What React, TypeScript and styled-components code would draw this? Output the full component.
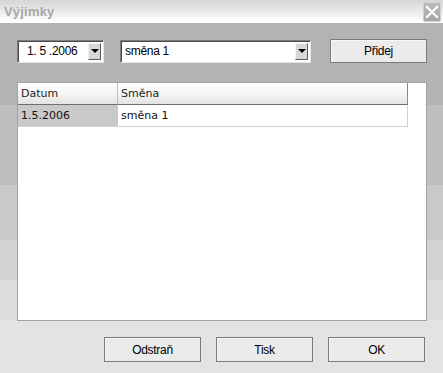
import React from 'react';
import styled, { createGlobalStyle } from 'styled-components';

const GlobalStyle = createGlobalStyle`
  html, body {
    margin: 0;
    padding: 0;
    background: #e4e4e4;
  }
`;

const rows = [{ date: '1.5.2006', shift: 'směna 1' }];

const App = () => {
  return (
    <Window>
      <GlobalStyle />
      <TitleBar>
        <Title>Výjimky</Title>
        <CloseButton aria-label="close">
          <svg width="14" height="14" viewBox="0 0 14 14">
            <path d="M2 2 L12 12 M12 2 L2 12" stroke="#fff" strokeWidth="2.2" strokeLinecap="square" />
          </svg>
        </CloseButton>
      </TitleBar>
      <Body>
        <TopRow>
          <Field $width={87}>
            <FieldText $center>1. 5 .2006</FieldText>
            <DropButton>
              <Arrow />
            </DropButton>
          </Field>
          <Field $width={191}>
            <FieldText>směna 1</FieldText>
            <DropButton>
              <Arrow />
            </DropButton>
          </Field>
          <AddButton $height={24}>Přidej</AddButton>
        </TopRow>
        <Panel>
          <Table>
            <HeadCell>Datum</HeadCell>
            <HeadCell $last>Směna</HeadCell>
            {rows.map((r) => (
              <React.Fragment key={r.date}>
                <DataCell $shaded>{r.date}</DataCell>
                <DataCell $last>{r.shift}</DataCell>
              </React.Fragment>
            ))}
          </Table>
        </Panel>
        <ButtonRow>
          <Button $height={25}>Odstraň</Button>
          <Button $height={25}>Tisk</Button>
          <Button $height={25}>OK</Button>
        </ButtonRow>
      </Body>
    </Window>
  );
};

const Window = styled.div`
  width: 443px;
  height: 373px;
  display: flex;
  flex-direction: column;
  overflow: hidden;
  font-family: 'Liberation Sans', Arial, sans-serif;
`;

const TitleBar = styled.div`
  height: 23px;
  flex: none;
  display: flex;
  align-items: flex-start;
  justify-content: space-between;
  background: linear-gradient(to bottom, #d6d6d6 0%, #e6e6e6 40%, #fbfbfb 85%, #ffffff 100%);
`;

const Title = styled.div`
  padding: 4px 0 0 4px;
  font-size: 13px;
  font-weight: bold;
  color: #a7a7a7;
  letter-spacing: 0.2px;
`;

const CloseButton = styled.div`
  width: 18px;
  height: 20px;
  margin: 2px 2px 0 0;
  box-sizing: border-box;
  border: 1px solid #cfcfcf;
  border-radius: 2px;
  background: linear-gradient(to bottom, #bcbcbc, #a4a4a4);
  display: flex;
  align-items: center;
  justify-content: center;
`;

const Body = styled.div`
  flex: 1;
  display: flex;
  flex-direction: column;
  background: linear-gradient(
    to bottom,
    #b3b3b3 0px,
    #b3b3b3 82px,
    #bebebe 82px,
    #bebebe 162px,
    #c9c9c9 162px,
    #c9c9c9 217px,
    #d3d3d3 217px,
    #d3d3d3 257px,
    #dcdcdc 257px,
    #dcdcdc 297px,
    #e3e3e3 297px,
    #e3e3e3 100%
  );
`;

const TopRow = styled.div`
  display: flex;
  align-items: center;
  gap: 16px;
  padding: 16px 16px 0 17px;
  height: 24px;
`;

const Field = styled.div<{ $width: number }>`
  width: ${(p) => p.$width}px;
  flex: none;
  height: 23px;
  box-sizing: border-box;
  display: flex;
  align-items: center;
  background: #fff;
  border-style: solid;
  border-width: 1px;
  border-color: #7c7c7c #e6e6e6 #e6e6e6 #7c7c7c;
  box-shadow: inset 1px 1px 0 #4a4a4a;
  padding: 1px 2px 1px 2px;
`;

const FieldText = styled.div<{ $center?: boolean }>`
  flex: 1;
  font-size: 12px;
  letter-spacing: -0.3px;
  color: #000;
  padding-left: ${(p) => (p.$center ? '7px' : '2px')};
`;

const DropButton = styled.div`
  width: 13px;
  height: 17px;
  box-sizing: border-box;
  background: #d8d8d8;
  border-style: solid;
  border-width: 1px;
  border-color: #f4f4f4 #5a5a5a #5a5a5a #f4f4f4;
  display: flex;
  align-items: center;
  justify-content: center;
`;

const Arrow = styled.div`
  width: 0;
  height: 0;
  border-left: 4px solid transparent;
  border-right: 4px solid transparent;
  border-top: 4px solid #000;
`;

const Button = styled.div<{ $height: number }>`
  width: 97px;
  flex: none;
  height: ${(p) => p.$height}px;
  box-sizing: border-box;
  border: 1px solid #7a7a7a;
  background: #ebebeb;
  box-shadow: inset 1px 1px 0 #f8f8f8;
  display: flex;
  align-items: center;
  justify-content: center;
  font-size: 12px;
  letter-spacing: -0.3px;
  color: #000;
`;

const AddButton = styled(Button)`
  margin-left: auto;
`;

const Panel = styled.div`
  margin: 19px 16px 0 17px;
  height: 239px;
  box-sizing: border-box;
  border: 1px solid #a2a2a2;
  background: #fff;
`;

const Table = styled.div`
  width: 390px;
  display: grid;
  grid-template-columns: 100px 290px;
  font-family: 'DejaVu Sans', Tahoma, sans-serif;
  font-size: 11px;
  color: #000;
`;

const HeadCell = styled.div<{ $last?: boolean }>`
  height: 22px;
  box-sizing: border-box;
  padding: 4px 0 0 3px;
  background: linear-gradient(to bottom, #ffffff 0%, #f6f6f6 50%, #e2e2e2 100%);
  border-bottom: 1px solid #6e6e6e;
  border-right: 1px solid ${(p) => (p.$last ? '#8a8a8a' : '#bdbdbd')};
  color: #222;
`;

const DataCell = styled.div<{ $shaded?: boolean; $last?: boolean }>`
  height: 22px;
  box-sizing: border-box;
  padding: 4px 0 0 3px;
  background: ${(p) => (p.$shaded ? '#c9c9c9' : '#fff')};
  border-bottom: 1px solid #d2d2d2;
  border-right: ${(p) => (p.$last ? '1px solid #d2d2d2' : 'none')};
  color: #111;
`;

const ButtonRow = styled.div`
  display: flex;
  justify-content: flex-end;
  gap: 15px;
  padding: 16px 18px 0 0;
`;

export default App;
